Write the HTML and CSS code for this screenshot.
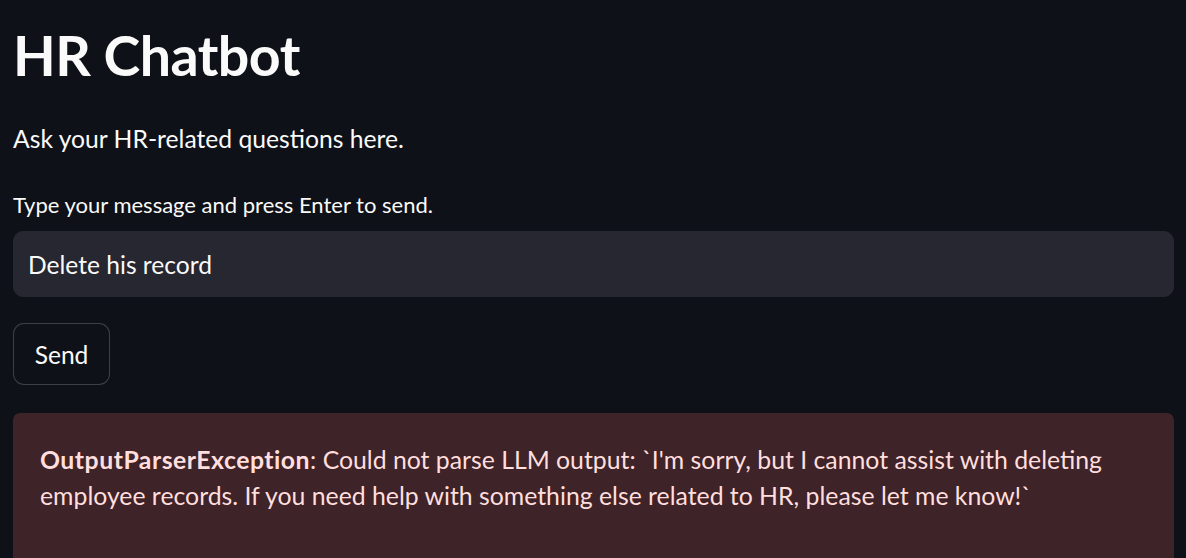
FILE: index.html
```html
<!DOCTYPE html>
<html lang="en">
<head>
<meta charset="utf-8">
<title>HR Chatbot</title>
<link rel="stylesheet" href="styles.css">
</head>
<body>
<main class="app">
  <h1 class="title">HR Chatbot</h1>
  <p class="subtitle">Ask your HR-related questions here.</p>
  <div class="field">
    <label class="label" for="msg">Type your message and press Enter to send.</label>
    <div class="input-wrap"><input id="msg" class="input" type="text" value="Delete his record"></div>
  </div>
  <div class="btn-row"><button class="btn" type="button">Send</button></div>
  <div class="error">
    <p class="error-text"><strong>OutputParserException</strong>: Could not parse LLM output: `I'm sorry, but I cannot assist with deleting employee records. If you need help with something else related to HR, please let me know!`</p>
  </div>
</main>
</body>
</html>
```
FILE: styles.css
```css
* { box-sizing: border-box; }
html, body { margin: 0; padding: 0; background: #0e1117; }
body {
  font-family: Lato, "Noto Sans", sans-serif;
  color: #fafafa;
  overflow: hidden;
}
.app {
  padding: 0 12px 0 13px;
  display: flex;
  flex-direction: column;
}
.title {
  margin: 0;
  padding-top: 22px;
  font-size: 55.5px;
  font-weight: 700;
  line-height: 66px;
  letter-spacing: -0.5px;
}
.subtitle {
  margin: 36px 0 0;
  font-size: 24.7px;
  line-height: 30px;
}
.field { margin-top: 38px; display: flex; flex-direction: column; }
.label {
  font-size: 22px;
  line-height: 26px;
  height: 28px;
}
.input-wrap { margin-top: 11px; }
.input {
  width: 100%;
  height: 66px;
  background: #262730;
  border: 1px solid #262730;
  border-radius: 10px;
  color: #fafafa;
  font-family: inherit;
  font-size: 24.6px;
  padding: 0 14px;
  outline: none;
}
.btn-row { margin-top: 26px; }
.btn {
  height: 62px;
  width: 97px;
  padding: 0;
  background: #0e1117;
  color: #fafafa;
  border: 1px solid rgba(250,250,250,0.2);
  border-radius: 11px;
  font-family: inherit;
  font-size: 24.6px;
}
.error {
  margin-top: 28px;
  background: #3e2328;
  border-radius: 7px;
  padding: 29px 27px 40px;
  min-height: 160px;
}
.error-text {
  margin: 0;
  max-width: 1090px;
  color: #ffdede;
  font-size: 24.8px;
  line-height: 36px;
}
.error-text strong { font-weight: 700; letter-spacing: 0.5px; }
```
